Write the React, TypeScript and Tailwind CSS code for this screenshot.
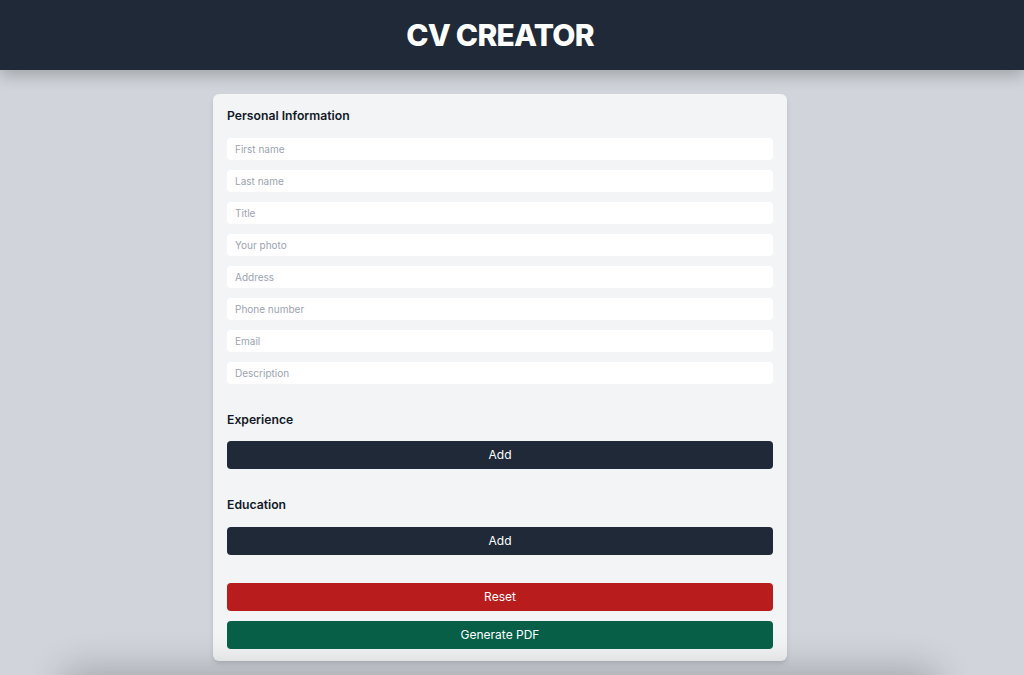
import React from "react";

const personalFields = [
  "First name",
  "Last name",
  "Title",
  "Your photo",
  "Address",
  "Phone number",
  "Email",
  "Description",
];

function SectionTitle({ children }: { children: React.ReactNode }) {
  return (
    <h2 className="text-[12.2px] leading-4 font-semibold text-[#111827]">
      {children}
    </h2>
  );
}

function Button({
  label,
  color,
}: {
  label: string;
  color: string;
}) {
  return (
    <button
      type="button"
      className={`h-7 w-full rounded text-[12px] text-white ${color}`}
    >
      {label}
    </button>
  );
}

export default function App() {
  return (
    <div
      className="min-h-screen overflow-hidden bg-[#d1d5db]"
      style={{ fontFamily: "Inter, 'Noto Sans', sans-serif" }}
    >
      <header className="relative z-10 flex h-[70px] items-center justify-center bg-[#1f2937] pr-6 shadow-[0_6px_14px_rgba(0,0,0,0.22)]">
        <h1 className="text-[30px] font-extrabold tracking-tight text-white">
          CV CREATOR
        </h1>
      </header>

      <main className="pt-6 pr-6">
        <div className="mx-auto w-[574px] rounded-md bg-[#f3f4f6] px-[14px] pt-[14px] pb-3 shadow-md">
          <SectionTitle>Personal Information</SectionTitle>
          <div className="mt-[14px] flex flex-col gap-[10px]">
            {personalFields.map((f) => (
              <input
                key={f}
                placeholder={f}
                className="h-[22px] w-full rounded bg-white px-2 text-[10px] text-gray-800 outline-none placeholder:text-[#9ca3af]"
              />
            ))}
          </div>

          <div className="mt-7">
            <SectionTitle>Experience</SectionTitle>
            <div className="mt-[13px]">
              <Button label="Add" color="bg-[#1f2937]" />
            </div>
          </div>

          <div className="mt-7">
            <SectionTitle>Education</SectionTitle>
            <div className="mt-[14px]">
              <Button label="Add" color="bg-[#1f2937]" />
            </div>
          </div>

          <div className="mt-7 flex flex-col gap-[10px]">
            <Button label="Reset" color="bg-[#b91c1c]" />
            <Button label="Generate PDF" color="bg-[#065f46]" />
          </div>
        </div>

        <div className="mx-auto mt-4 h-[400px] w-[860px] rounded-md bg-[#d1d5db] shadow-[0_0_36px_8px_rgba(0,0,0,0.22)]" />
      </main>
    </div>
  );
}
